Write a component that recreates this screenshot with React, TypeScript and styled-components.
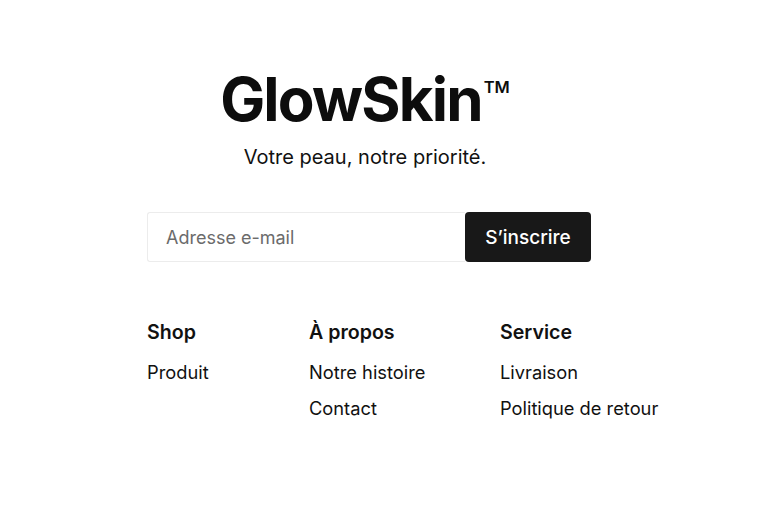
import React from 'react';
import styled, { createGlobalStyle } from 'styled-components';

const GlobalStyle = createGlobalStyle`
  html, body {
    margin: 0;
    padding: 0;
    background: #ffffff;
    font-family: Inter, "Noto Sans", "Liberation Sans", sans-serif;
    color: #111111;
  }
`;

const Page = styled.div`
  width: 760px;
  height: 507px;
  padding-right: 22px;
  box-sizing: border-box;
  display: flex;
  justify-content: center;
`;

const Container = styled.div`
  width: 444px;
  display: flex;
  flex-direction: column;
  padding-top: 62px;
`;

const Brand = styled.div`
  display: flex;
  flex-direction: column;
  align-items: center;
  padding-right: 8px;
`;

const Logo = styled.h1`
  margin: 0;
  display: flex;
  align-items: flex-start;
  font-size: 60px;
  font-weight: 700;
  letter-spacing: -1.8px;
  line-height: 74px;
  color: #0d0d0d;
`;

const Trademark = styled.span`
  font-size: 16.5px;
  font-weight: 600;
  letter-spacing: 0;
  line-height: 18px;
  margin-top: 16px;
  margin-left: 2px;
`;

const Tagline = styled.p`
  margin: 8px 0 0;
  font-size: 20px;
  font-weight: 400;
  line-height: 26px;
  color: #111111;
`;

const Form = styled.form`
  display: flex;
  margin-top: 42px;
  height: 50px;
`;

const EmailInput = styled.input`
  flex: 1;
  min-width: 0;
  height: 50px;
  box-sizing: border-box;
  border: 1px solid #ececec;
  border-right: none;
  border-radius: 3px 0 0 3px;
  padding: 0 18px;
  font-family: inherit;
  font-size: 18px;
  color: #111;
  background: #fff;
  outline: none;
  &::placeholder {
    color: #6b6b6b;
  }
`;

const SubmitButton = styled.button`
  flex-shrink: 0;
  width: 126px;
  height: 50px;
  border: none;
  border-radius: 4px;
  background: #181818;
  color: #ffffff;
  font-family: inherit;
  font-size: 19px;
  font-weight: 500;
  cursor: pointer;
`;

const Columns = styled.div`
  display: flex;
  margin-top: 56px;
`;

const Column = styled.div<{ $width?: number }>`
  width: ${(p) => (p.$width ? `${p.$width}px` : 'auto')};
  flex-shrink: 0;
  display: flex;
  flex-direction: column;
`;

const ColumnTitle = styled.h3`
  margin: 0 0 8px;
  font-size: 19.6px;
  font-weight: 600;
  line-height: 28px;
`;

const ColumnLink = styled.a`
  font-size: 18.3px;
  line-height: 36px;
  color: #111111;
  text-decoration: none;
  white-space: nowrap;
`;

const columns = [
  { title: 'Shop', width: 162, links: ['Produit'] },
  { title: 'À propos', width: 191, links: ['Notre histoire', 'Contact'] },
  { title: 'Service', width: 0, links: ['Livraison', 'Politique de retour'] },
];

export default function App() {
  return (
    <>
      <GlobalStyle />
      <Page>
        <Container>
          <Brand>
            <Logo>
              GlowSkin<Trademark>TM</Trademark>
            </Logo>
            <Tagline>Votre peau, notre priorité.</Tagline>
          </Brand>
          <Form onSubmit={(e) => e.preventDefault()}>
            <EmailInput type="email" placeholder="Adresse e-mail" />
            <SubmitButton type="submit">S’inscrire</SubmitButton>
          </Form>
          <Columns>
            {columns.map((col) => (
              <Column key={col.title} $width={col.width || undefined}>
                <ColumnTitle>{col.title}</ColumnTitle>
                {col.links.map((l) => (
                  <ColumnLink key={l} href="#">
                    {l}
                  </ColumnLink>
                ))}
              </Column>
            ))}
          </Columns>
        </Container>
      </Page>
    </>
  );
}
